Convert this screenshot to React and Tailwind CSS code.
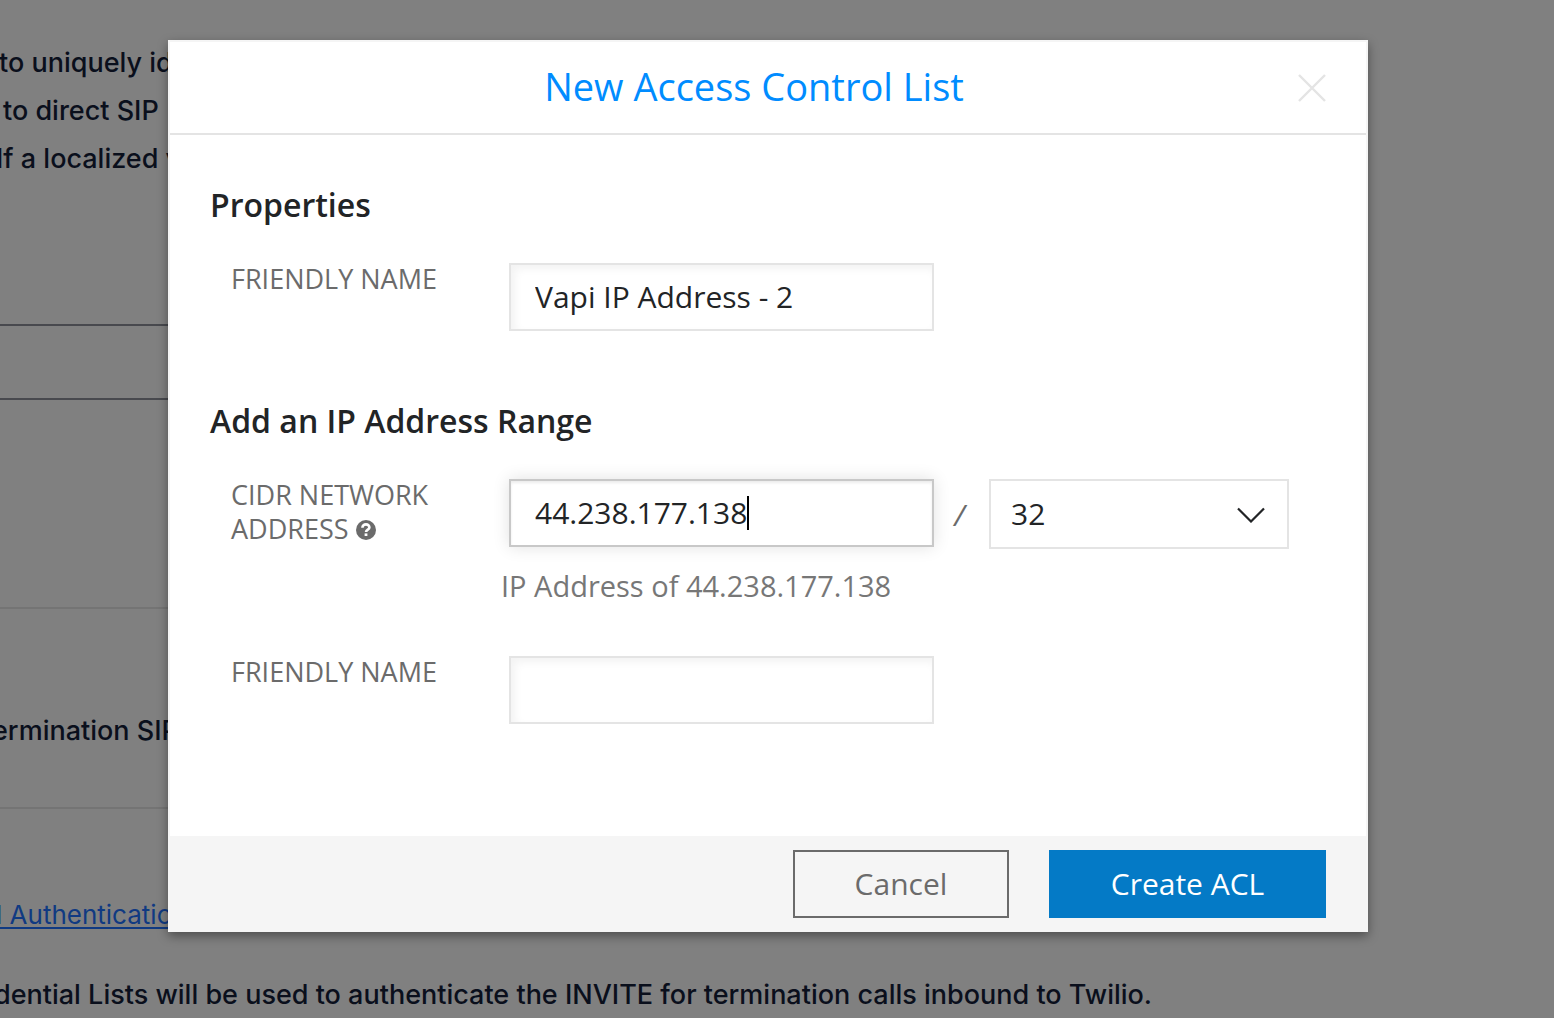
function Label({ htmlFor, children }) {
  return (
    <label htmlFor={htmlFor} className="-mt-px w-[278px] shrink-0 text-[27px] leading-[34px] text-[#6b6b6b] uppercase">
      {children}
    </label>
  );
}

const field =
  "h-[68px] w-[425px] border-2 border-[#e4e4e4] bg-white px-6 pb-0.5 text-[30px] text-[#222426] shadow-[inset_4px_4px_8px_rgba(0,0,0,0.05)] outline-none";

function Page() {
  return (
    <div className="h-screen overflow-hidden whitespace-nowrap bg-[#808080] font-['Inter',sans-serif] text-[27px] leading-[48px] font-medium text-[#0a0f1c]">
      <div className="max-w-[1300px]">
        <div className="flex h-[324px] flex-col pt-[39px]">
          <p className="-ml-px">to uniquely id</p>
          <p className="ml-[3px]">to direct SIP</p>
          <p className="-ml-1">If a localized v</p>
        </div>
        <div className="h-[76px] border-y-2 border-[#48494e]" />
        <div className="h-[209px] border-b-2 border-[#747474]" />
        <div className="h-[200px] border-b-2 border-[#747474] pt-[98px]">
          <p className="-ml-2">ermination SIP</p>
        </div>
        <p className="-ml-1 pt-[82px]">
          <a href="#authentication" className="text-[26px] font-normal text-[#103a82] underline decoration-2 underline-offset-3">l Authentication</a>
        </p>
        <p className="-ml-1.5 pt-8">
          dential Lists will be used to authenticate the INVITE for termination calls inbound to Twilio.
        </p>
      </div>
    </div>
  );
}

export default function App() {
  return (
    <div className="relative">
      <Page />
      <div className="absolute inset-0 flex items-start justify-center overflow-hidden pt-10 pr-[18px]">
        <form
          role="dialog"
          aria-labelledby="dialog-title"
          className="w-full max-w-[1200px] border-2 border-[#f5f5f5] bg-white font-['Open_Sans',sans-serif] text-[#222426] shadow-[0_4px_10px_rgba(0,0,0,0.4)]"
        >
          <header className="relative flex h-[93px] items-center justify-center border-b-2 border-[#e4e4e4] pr-7 pb-1">
            <h1 id="dialog-title" className="text-[38px] leading-[52px] text-[#008cff]">New Access Control List</h1>
            <button type="button" aria-label="Close" className="absolute top-8 right-10 size-7 text-[#e4e4e4]">
              <svg viewBox="0 0 28 28" className="size-7" fill="none" stroke="currentColor" strokeWidth="2.4">
                <path d="M1 1 27 27M27 1 1 27" />
              </svg>
            </button>
          </header>

          <div className="h-[701px] px-10 pt-12">
            <h2 className="text-[32px] leading-[44px] font-semibold">Properties</h2>
            <div className="mt-9 flex items-start pl-[21px]">
              <Label htmlFor="acl-name">Friendly Name</Label>
              <input id="acl-name" defaultValue="Vapi IP Address - 2" className={field} />
            </div>

            <h2 className="mt-[68px] text-[32px] leading-[44px] font-semibold">Add an IP Address Range</h2>
            <div className="mt-9 flex items-start pl-[21px]">
              <Label htmlFor="cidr">
                CIDR Network
                <br />
                Address{" "}
                <svg viewBox="0 0 20 20" className="inline size-5 align-[-1px]" aria-hidden="true">
                  <circle cx="10" cy="10" r="10" fill="#6b6b6b" />
                  <path d="M6.4 7.8C6.4 5.4 8 4.4 10 4.4S13.4 5.6 13.4 7.4C13.4 9.6 10 9.6 10 12" fill="none" stroke="#fff" strokeWidth="2.6" />
                  <rect x="8.6" y="13.4" width="2.8" height="2.6" fill="#fff" />
                </svg>
              </Label>
              <div className="flex h-[68px] w-[425px] items-center border-2 border-[#c8c8c8] bg-white px-6 text-[30px] shadow-[0_0_16px_rgba(0,0,0,0.12),inset_0_2px_3px_rgba(0,0,0,0.08)]">
                <input id="cidr" defaultValue="44.238.177.138" className="bg-transparent pb-0.5 caret-transparent outline-none [field-sizing:content]" />
                <span className="h-[34px] w-0.5 bg-black" />
              </div>
              <span className="w-[55px] pt-4 pr-1 text-center text-[30px] leading-[40px] text-[#6b6b6b] italic">/</span>
              <div className="relative">
                <select aria-label="Prefix length" className="h-[70px] w-[300px] appearance-none border-2 border-[#e4e4e4] bg-white px-5 pb-0.5 text-[30px] outline-none">
                  <option>32</option>
                </select>
                <svg viewBox="0 0 28 16" className="pointer-events-none absolute top-7 right-6 h-4 w-7" fill="none" stroke="#222426" strokeWidth="2.2">
                  <path d="M1 1.5 14 14.5 27 1.5" />
                </svg>
              </div>
            </div>
            <p className="mt-[18px] pl-[291px] text-[29px] leading-[38px] text-[#777]">IP Address of 44.238.177.138</p>

            <div className="mt-[51px] flex items-start pl-[21px]">
              <Label htmlFor="range-name">Friendly Name</Label>
              <input id="range-name" className={field} />
            </div>
          </div>

          <footer className="flex justify-end gap-10 bg-[#f5f5f5] px-10 pt-[14px] pb-3 text-[30px]">
            <button type="button" className="h-[68px] w-[216px] border-2 border-[#6b6b6b] pb-0.5 text-[#6b6b6b]">Cancel</button>
            <button type="submit" className="h-[68px] w-[277px] bg-[#047ac6] pb-0.5 text-white">Create ACL</button>
          </footer>
        </form>
      </div>
    </div>
  );
}
